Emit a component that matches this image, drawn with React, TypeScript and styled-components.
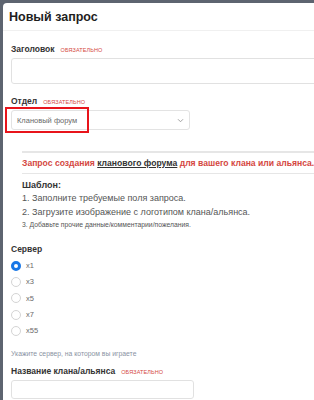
import React from "react";
import styled, { createGlobalStyle } from "styled-components";

const GlobalStyle = createGlobalStyle`
  html, body {
    margin: 0;
    padding: 0;
    background: #5d6470;
    overflow: hidden;
  }
  body {
    font-family: "Liberation Sans", Arial, sans-serif;
  }
`;

const red = "#d4473f";

const Modal = styled.div`
  margin: 3px 0 0 3px;
  width: 311px;
  height: 397px;
  overflow: hidden;
  background: #fff;
  border-top-left-radius: 4px;
`;

const Header = styled.div`
  height: 27px;
  display: flex;
  align-items: center;
  padding-left: 6px;
  border-bottom: 1px solid #f0f0f0;
`;

const Title = styled.h1`
  margin: 0;
  font-size: 12.5px;
  font-weight: 700;
  color: #1e1e1e;
`;

const Body = styled.div`
  padding: 12px 0 0 8px;
`;

const Field = styled.div<{ gap?: number; top?: number }>`
  margin-top: ${(p) => p.top ?? 0}px;
  margin-bottom: ${(p) => p.gap ?? 0}px;
`;

const Label = styled.div`
  display: flex;
  align-items: baseline;
  gap: 6px;
  height: 12px;
  line-height: 12px;
  margin-bottom: 3px;
  font-size: 8.5px;
  font-weight: 700;
  color: #333;
`;

const Required = styled.span`
  font-size: 5.5px;
  font-weight: 400;
  color: ${red};
  text-transform: uppercase;
  letter-spacing: 0.1px;
`;

const Input = styled.div<{ h: number; w?: number }>`
  box-sizing: border-box;
  height: ${(p) => p.h}px;
  width: ${(p) => (p.w ? `${p.w}px` : "330px")};
  border: 1px solid #e1e1e1;
  border-radius: 3px;
  background: #fff;
`;

const SelectWrap = styled.div`
  position: relative;
  width: 179px;
`;

const Select = styled.div`
  box-sizing: border-box;
  height: 20px;
  border: 1px solid #e3e3e3;
  border-radius: 3px;
  display: flex;
  align-items: center;
  justify-content: space-between;
  padding: 0 5px;
  font-size: 7.5px;
  color: #6a6a6a;
`;

const Highlight = styled.div`
  position: absolute;
  left: -6px;
  top: -3px;
  width: 84px;
  height: 26px;
  box-sizing: border-box;
  border: 2px solid #e8141b;
  pointer-events: none;
`;

const Notice = styled.div`
  margin: 21px 0 0 11px;
  border-top: 2px solid #e6e6e6;
`;

const NoticeText = styled.div`
  padding: 4px 0;
  font-size: 8.6px;
  font-weight: 700;
  color: ${red};
  white-space: nowrap;
  border-bottom: 1px solid #e6e6e6;
  line-height: 12px;
`;

const ForumLink = styled.span`
  color: #333;
  text-decoration: underline;
`;

const Template = styled.div`
  padding-top: 5px;
  color: #555;
`;

const TemplateTitle = styled.div`
  font-size: 9px;
  font-weight: 700;
  color: #333;
  line-height: 12px;
`;

const Step = styled.div<{ small?: boolean }>`
  font-size: ${(p) => (p.small ? 6.8 : 9)}px;
  line-height: ${(p) => (p.small ? 12 : 14)}px;
  white-space: nowrap;
`;

const ServerBlock = styled.div`
  margin-top: 12px;
`;

const Radios = styled.div`
  display: flex;
  flex-direction: column;
  gap: 5px;
  margin-top: 5px;
`;

const RadioRow = styled.label`
  display: flex;
  align-items: center;
  gap: 5px;
  height: 11.3px;
  font-size: 7.5px;
  color: #6a6a6a;
`;

const Circle = styled.span<{ checked?: boolean }>`
  box-sizing: border-box;
  width: 10px;
  height: 10px;
  border-radius: 50%;
  border: ${(p) => (p.checked ? "3px solid #1877e6" : "1px solid #d4d4d4")};
  background: #fff;
`;

const Hint = styled.div`
  margin-top: 13px;
  font-size: 6.8px;
  color: #8a93a3;
  line-height: 10px;
`;

const Chevron = () => (
  <svg width="7" height="5" viewBox="0 0 8 6" fill="none">
    <path d="M1 1.5 L4 4.5 L7 1.5" stroke="#a0a0a0" strokeWidth="1.2" />
  </svg>
);

const servers = ["x1", "x3", "x5", "x7", "x55"];

export default function App() {
  return (
    <>
      <GlobalStyle />
      <Modal>
        <Header>
          <Title>Новый запрос</Title>
        </Header>
        <Body>
          <Field gap={11}>
            <Label>
              Заголовок <Required>Обязательно</Required>
            </Label>
            <Input h={26} />
          </Field>
          <Field>
            <Label>
              Отдел <Required>Обязательно</Required>
            </Label>
            <SelectWrap>
              <Select>
                Клановый форум
                <Chevron />
              </Select>
              <Highlight />
            </SelectWrap>
          </Field>
          <Notice>
            <NoticeText>
              Запрос создания <ForumLink>кланового форума</ForumLink> для
              вашего клана или альянса.
            </NoticeText>
            <Template>
              <TemplateTitle>Шаблон:</TemplateTitle>
              <Step>1. Заполните требуемые поля запроса.</Step>
              <Step>2. Загрузите изображение с логотипом клана/альянса.</Step>
              <Step small>3. Добавьте прочие данные/комментарии/пожелания.</Step>
            </Template>
          </Notice>
          <ServerBlock>
            <Label>Сервер</Label>
            <Radios>
              {servers.map((s, i) => (
                <RadioRow key={s}>
                  <Circle checked={i === 0} />
                  {s}
                </RadioRow>
              ))}
            </Radios>
            <Hint>Укажите сервер, на котором вы играете</Hint>
          </ServerBlock>
          <Field top={6}>
            <Label>
              Название клана/альянса <Required>Обязательно</Required>
            </Label>
            <Input h={19} w={183} />
          </Field>
        </Body>
      </Modal>
    </>
  );
}
